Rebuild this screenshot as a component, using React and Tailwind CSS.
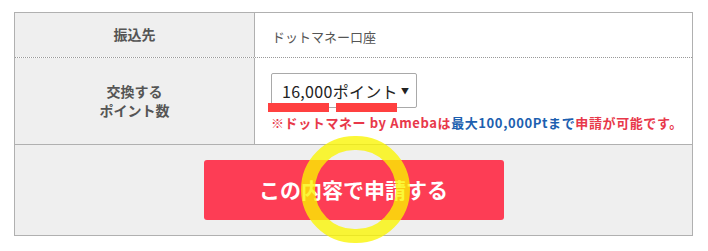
import React from 'react';

const font = { fontFamily: '"Noto Sans CJK JP", "Noto Sans", sans-serif' };

const App = () => {
  return (
    <div className="w-[708px] h-[251px] bg-white pt-[12px] pl-[14px] relative overflow-hidden" style={font}>
      <div className="w-[679px] border border-[#b0b0b0]">
        {/* 振込先 */}
        <div className="flex h-[45px] border-b border-dotted border-[#999]">
          <div className="w-[240px] shrink-0 bg-[#efefef] border-r border-[#b0b0b0] flex items-center justify-center pb-[2px] text-[14px] font-bold text-[#555]">
            振込先
          </div>
          <div className="flex-1 flex items-center pl-[17px] pt-[3px] text-[13px] text-[#555]">
            ドットマネー口座
          </div>
        </div>

        {/* ポイント数 */}
        <div className="flex h-[87px] border-b border-[#b0b0b0]">
          <div className="w-[240px] shrink-0 bg-[#efefef] border-r border-[#b0b0b0] flex flex-col items-center justify-center text-[14px] font-bold text-[#555] leading-[19px]">
            <span>交換する</span>
            <span>ポイント数</span>
          </div>
          <div className="flex-1 pl-[16px] pt-[15px]">
            <div className="w-[146px] h-[35px] border border-[#a9a9a9] rounded-[2px] flex items-center justify-between pl-[10px] pr-[7px] bg-white">
              <span className="text-[16px] text-[#222] tracking-[0.3px]">16,000ポイント</span>
              <span className="text-[8px] text-[#222]">▼</span>
            </div>
            <p className="mt-[7px] text-[13px] font-bold leading-[16px] whitespace-nowrap tracking-[0.6px]">
              <span className="text-[#e8384a]">※ドットマネー by Amebaは</span>
              <span className="text-[#1d5fb0]">最大100,000Ptまで</span>
              <span className="text-[#e8384a]">申請が可能です。</span>
            </p>
          </div>
        </div>

        {/* button */}
        <div className="bg-[#efefef] h-[90px] flex items-center justify-center">
          <button className="w-[300px] h-[60px] rounded-[3px] bg-[#fd3d55] text-white text-[21px] font-bold">
            この内容で申請する
          </button>
        </div>
      </div>

      {/* annotations */}
      <div className="absolute left-[268px] top-[103px] w-[61px] h-[9px] bg-[#ff4040]" />
      <div className="absolute left-[336px] top-[103px] w-[61px] h-[9px] bg-[#ff4040]" />
      <div className="absolute left-[301px] top-[136px] w-[109px] h-[107px] rounded-full border-[14px] border-[rgba(250,245,0,0.78)]" />
    </div>
  );
};

export default App;
